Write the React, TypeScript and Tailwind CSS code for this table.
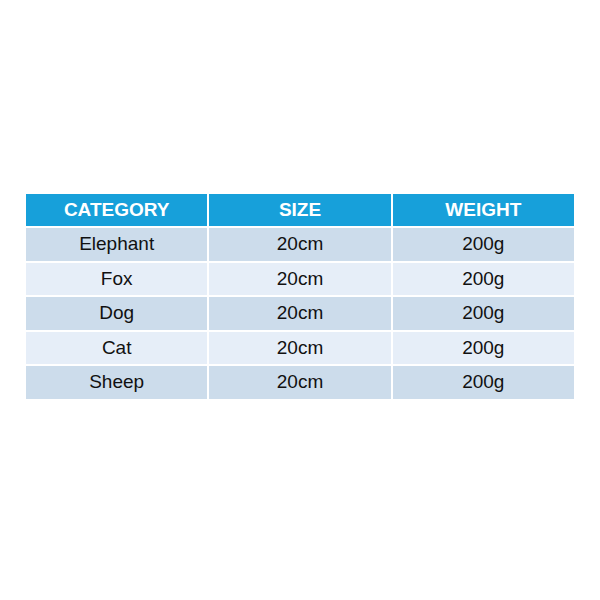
import React from "react";

const rows = ["Elephant", "Fox", "Dog", "Cat", "Sheep"];

export default function App() {
  return (
    <div className="w-[600px] h-[600px] bg-white flex items-start justify-center pt-[194px]" style={{ fontFamily: '"Liberation Sans", Arial, sans-serif' }}>
      <div className="w-[548px] grid grid-cols-3 gap-[2px]">
        {["CATEGORY", "SIZE", "WEIGHT"].map((h) => (
          <div key={h} className="h-[32px] bg-[#17a0da] text-white font-bold text-[19px] flex items-center justify-center">
            {h}
          </div>
        ))}
        {rows.map((r, i) => {
          const bg = i % 2 === 0 ? "bg-[#ccdceb]" : "bg-[#e6eef8]";
          return (
            <React.Fragment key={r}>
              <div className={`h-[32.6px] ${bg} text-[19px] text-[#111] flex items-center justify-center`}>{r}</div>
              <div className={`h-[32.6px] ${bg} text-[19px] text-[#111] flex items-center justify-center`}>20cm</div>
              <div className={`h-[32.6px] ${bg} text-[19px] text-[#111] flex items-center justify-center`}>200g</div>
            </React.Fragment>
          );
        })}
      </div>
    </div>
  );
}
